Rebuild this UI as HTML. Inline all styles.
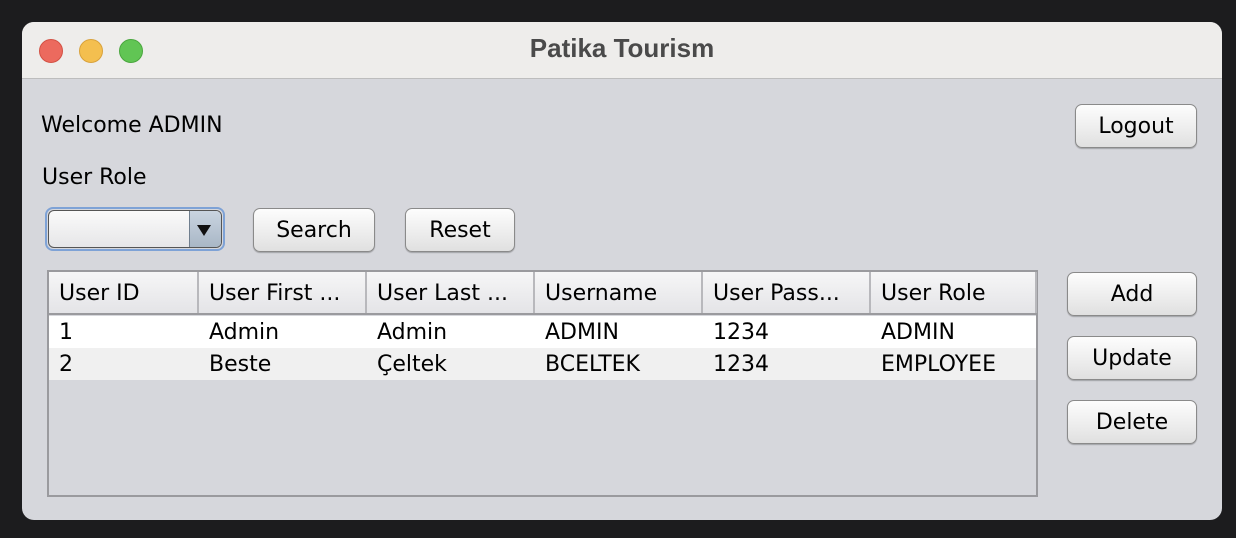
<!DOCTYPE html>
<html><head><meta charset="utf-8"><style>
*{box-sizing:border-box;margin:0;padding:0}
body{width:1236px;height:538px;background:#1c1c1e;position:relative;overflow:hidden;font-family:"DejaVu Sans","Liberation Sans",sans-serif;color:#000}
.win{position:absolute;left:22px;top:22px;width:1200px;height:498px;border-radius:12px;background:#d6d7dc;overflow:hidden}
.tb{position:absolute;left:0;top:0;width:1200px;height:57px;background:#eeedeb;border-bottom:1px solid #bdbdbd}
.dot{position:absolute;top:17px;width:24px;height:24px;border-radius:50%}
.title{position:absolute;left:0;width:1200px;top:11px;text-align:center;font-size:26px;font-weight:bold;color:#4a4a4a;font-family:"Liberation Sans",sans-serif}
.a{position:absolute}
.lbl{font-size:22px}
.btn{position:absolute;height:44px;border:1px solid #8a8a8a;border-radius:7px;background:linear-gradient(#fdfdfd,#ececec 60%,#e0e0e0);box-shadow:0 1px 1px rgba(0,0,0,.25);font-size:22px;text-align:center;line-height:43px}
.tbl{position:absolute;left:25px;top:248px;width:991px;height:227px;border:2px solid #9a9a9e;background:#d6d7dc}
.hd{position:absolute;left:0;top:0;width:987px;height:43px;background:linear-gradient(#f6f6f7,#e4e4e7);border-bottom:2px solid #9a9a9e}
.hc{position:absolute;top:0;height:41px;border-right:2px solid #b8b8bc;font-size:22px;line-height:43px;padding-left:10px;white-space:nowrap}
.row{position:absolute;left:0;width:987px;height:32px;font-size:22px;line-height:34px}
.row span{position:absolute;top:0}
</style></head><body>
<div class="win">
<div class="tb">
<div class="dot" style="left:17px;background:#ec6a5e;border:1px solid #d35144"></div>
<div class="dot" style="left:57px;background:#f4bf4f;border:1px solid #d9a23b"></div>
<div class="dot" style="left:97px;background:#61c554;border:1px solid #4aa73e"></div>
<div class="title">Patika Tourism</div>
</div>
<div class="a lbl" style="left:19px;top:91px">Welcome ADMIN</div>
<div class="a lbl" style="left:20px;top:143px">User Role</div>
<div class="a" style="left:23px;top:185px;width:180px;height:44px;border:2px solid #7ea2d6;border-radius:8px;padding:1px">
 <div style="position:relative;width:100%;height:100%;border:1px solid #555;border-radius:6px;background:linear-gradient(#fafafa,#e6e6e8);overflow:hidden">
  <div style="position:absolute;right:0;top:0;width:32px;height:100%;background:linear-gradient(#c9d4e0,#a9b7c6);border-left:1px solid #6f7e8e"></div>
  <div style="position:absolute;right:10px;top:14px;width:0;height:0;border-left:7px solid transparent;border-right:7px solid transparent;border-top:11px solid #111"></div>
 </div>
</div>
<div class="btn" style="left:231px;top:186px;width:122px">Search</div>
<div class="btn" style="left:383px;top:186px;width:110px">Reset</div>
<div class="btn" style="left:1053px;top:82px;width:122px">Logout</div>
<div class="btn" style="left:1045px;top:250px;width:130px">Add</div>
<div class="btn" style="left:1045px;top:314px;width:130px">Update</div>
<div class="btn" style="left:1045px;top:378px;width:130px">Delete</div>
<div class="tbl">
 <div class="hd">
  <div class="hc" style="left:0;width:150px">User ID</div>
  <div class="hc" style="left:150px;width:168px">User First ...</div>
  <div class="hc" style="left:318px;width:168px">User Last ...</div>
  <div class="hc" style="left:486px;width:168px">Username</div>
  <div class="hc" style="left:654px;width:168px">User Pass...</div>
  <div class="hc" style="left:822px;width:166px">User Role</div>
 </div>
 <div class="row" style="top:44px;background:#fff"><span style="left:10px">1</span><span style="left:160px">Admin</span><span style="left:328px">Admin</span><span style="left:496px">ADMIN</span><span style="left:664px">1234</span><span style="left:832px">ADMIN</span></div>
 <div class="row" style="top:76px;background:#f0f0f0"><span style="left:10px">2</span><span style="left:160px">Beste</span><span style="left:328px">Çeltek</span><span style="left:496px">BCELTEK</span><span style="left:664px">1234</span><span style="left:832px">EMPLOYEE</span></div>
</div>
</div>
</body></html>
